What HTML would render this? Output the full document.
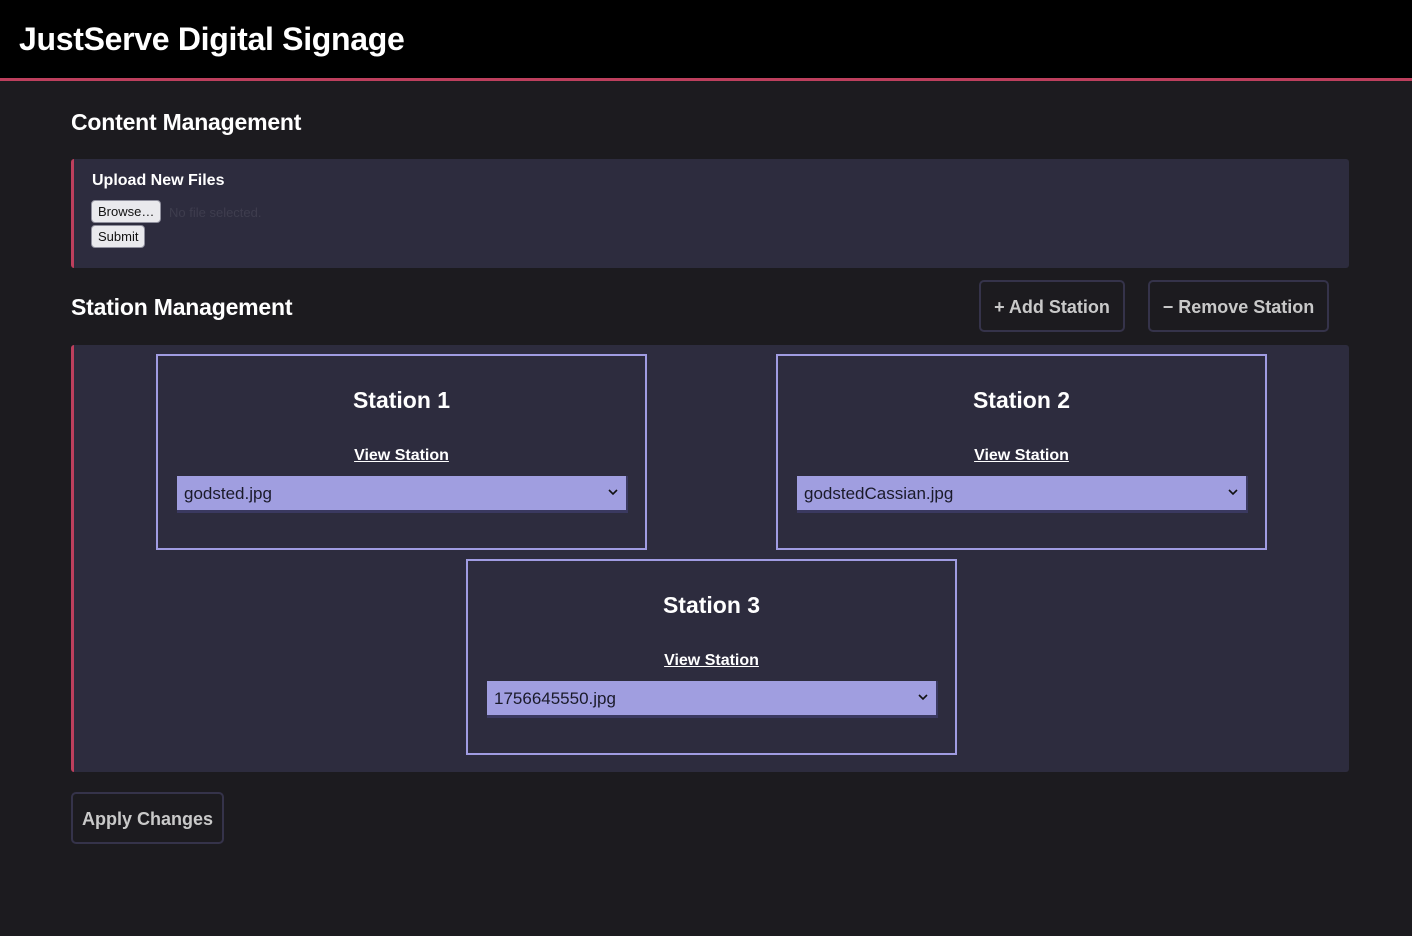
<!DOCTYPE html>
<html><head><meta charset="utf-8"><style>
*{box-sizing:border-box;margin:0;padding:0}
body{width:1412px;height:936px;background:#1c1b1f;font-family:"Liberation Sans",sans-serif;color:#fff;position:relative;overflow:hidden}
.a{position:absolute}
.hdr{left:0;top:0;width:1412px;height:78px;background:#000;border-bottom:3px solid #bd3f5d;box-sizing:content-box}
.hdr h1{position:absolute;left:19px;top:21px;font-size:32px;font-weight:bold;letter-spacing:-0.3px}
h2{font-size:23px;font-weight:bold;letter-spacing:-0.2px}
.panel{background:#2d2c3e;border-left:3px solid #bd3f5d;border-radius:3px}
.fbtn{background:#e9e9ed;color:#111;border:1px solid #8f8f9d;border-radius:4px;font-size:13px;padding:0 6px;height:23px;line-height:21px}
.btn{border:2px solid #35334a;border-radius:5px;background:#1c1b1f;color:#c9c9c9;font-weight:bold;font-size:18px;text-align:center}
.st{border:2px solid #a09ce2;width:491px;height:196px}
.st h3{position:absolute;top:31px;width:100%;text-align:center;font-size:23px;font-weight:bold}
.st a{position:absolute;top:91px;width:100%;text-align:center;font-size:16px;font-weight:bold;color:#fff;text-decoration:underline}
.sel{position:absolute;left:19px;top:120px;width:451px;height:37px;background:#a09ee0;border-bottom:3px solid #3a3960;border-right:2px solid #3a3960;color:#1a1a2a;font-size:17px;padding:8px 7px}
.sel svg{position:absolute;right:8px;top:13px}
</style></head><body>
<div class="a hdr"><h1>JustServe Digital Signage</h1></div>
<h2 class="a" style="left:71px;top:109px">Content Management</h2>
<div class="a panel" style="left:71px;top:159px;width:1278px;height:109px">
 <div class="a" style="left:18px;top:13px;font-size:16px;font-weight:bold">Upload New Files</div>
 <div class="a fbtn" style="left:17px;top:41px">Browse…</div>
 <div class="a" style="left:95px;top:46px;font-size:13px;color:#3e3d4e">No file selected.</div>
 <div class="a fbtn" style="left:17px;top:66px">Submit</div>
</div>
<h2 class="a" style="left:71px;top:294px">Station Management</h2>
<div class="a btn" style="left:979px;top:280px;width:146px;height:52px;line-height:50px">+ Add Station</div>
<div class="a btn" style="left:1148px;top:280px;width:181px;height:52px;line-height:50px">− Remove Station</div>
<div class="a panel" style="left:71px;top:345px;width:1278px;height:427px"></div>
<div class="a st" style="left:156px;top:354px"><h3>Station 1</h3><a>View Station</a><div class="sel">godsted.jpg<svg width="10" height="7" viewBox="0 0 10 7"><path d="M1 1l4 4 4-4" stroke="#111" stroke-width="1.6" fill="none"/></svg></div></div>
<div class="a st" style="left:776px;top:354px"><h3>Station 2</h3><a>View Station</a><div class="sel">godstedCassian.jpg<svg width="10" height="7" viewBox="0 0 10 7"><path d="M1 1l4 4 4-4" stroke="#111" stroke-width="1.6" fill="none"/></svg></div></div>
<div class="a st" style="left:466px;top:559px"><h3>Station 3</h3><a>View Station</a><div class="sel">1756645550.jpg<svg width="10" height="7" viewBox="0 0 10 7"><path d="M1 1l4 4 4-4" stroke="#111" stroke-width="1.6" fill="none"/></svg></div></div>
<div class="a btn" style="left:71px;top:792px;width:153px;height:52px;line-height:50px">Apply Changes</div>
</body></html>
